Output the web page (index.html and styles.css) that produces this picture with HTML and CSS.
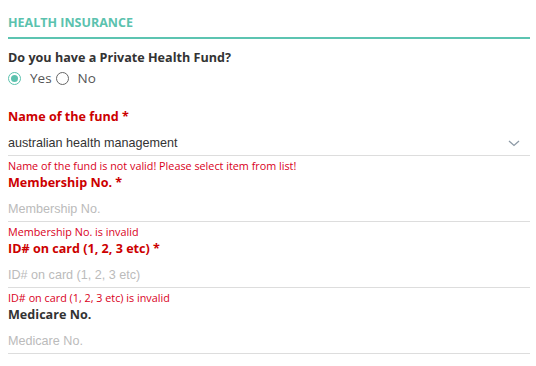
FILE: index.html
```html
<!DOCTYPE html>
<html>
<head>
<meta charset="utf-8">
<link rel="stylesheet" href="styles.css">
</head>
<body>
<div class="form">
  <div class="section-title">HEALTH INSURANCE</div>
  <div class="question">
    <div class="label">Do you have a Private Health Fund?</div>
    <div class="radios">
      <label class="radio"><span class="circle checked"></span><span class="rtext">Yes</span></label>
      <label class="radio"><span class="circle"></span><span class="rtext">No</span></label>
    </div>
  </div>
  <div class="field first">
    <div class="label invalid">Name of the fund *</div>
    <div class="input select"><span class="value">australian health management</span>
      <svg class="chev" width="12" height="7" viewBox="0 0 12 7"><path d="M1 1 L6 5.5 L11 1" fill="none" stroke="#8d9aa6" stroke-width="1.3"/></svg>
    </div>
    <div class="error">Name of the fund is not valid! Please select item from list!</div>
  </div>
  <div class="field">
    <div class="label invalid">Membership No. *</div>
    <div class="input"><span class="ph">Membership No.</span></div>
    <div class="error">Membership No. is invalid</div>
  </div>
  <div class="field">
    <div class="label invalid">ID# on card (1, 2, 3 etc) *</div>
    <div class="input"><span class="ph">ID# on card (1, 2, 3 etc)</span></div>
    <div class="error">ID# on card (1, 2, 3 etc) is invalid</div>
  </div>
  <div class="field">
    <div class="label">Medicare No.</div>
    <div class="input"><span class="ph">Medicare No.</span></div>
  </div>
</div>
</body>
</html>
```
FILE: styles.css
```css
html, body { margin: 0; padding: 0; background: #fff; }
body { font-family: "Open Sans", sans-serif; color: #333; }
.form { width: 522px; margin-left: 8px; padding-top: 14px; }
.section-title {
  font-size: 12.5px; font-weight: 700; color: #5bc2ae;
  line-height: 17px; padding-bottom: 6px;
  border-bottom: 2px solid #5cc4b1;
}
.question { padding-top: 10px; }
.label { font-size: 12.6px; font-weight: 700; line-height: 18px; color: #333; }
.label.invalid { color: #cc0000; }
.radios { display: flex; align-items: center; height: 22px; }
.radio { display: flex; align-items: center; }
.circle {
  width: 11px; height: 11px; border: 1px solid #666; border-radius: 50%;
  display: inline-flex; align-items: center; justify-content: center; box-sizing: content-box;
}
.circle.checked { border-color: #5bc2ae; }
.circle.checked::after { content: ""; width: 7px; height: 7px; border-radius: 50%; background: #5bc2ae; }
.rtext { font-size: 13.5px; color: #555; margin-left: 9px; margin-right: 4px; }
.field.first { margin-top: 19px; }
.input {
  border-bottom: 1px solid #ddd; display: flex; align-items: flex-end;
  padding-bottom: 4px; box-sizing: border-box; height: 30px;
  font-family: "Liberation Sans", Arial, sans-serif; font-size: 12.6px; line-height: 15px;
}
.input .value { color: #333; flex: 1; }
.input .ph { color: #bbb; }
.chev { margin-right: 10px; margin-bottom: 4px; }
.error { font-size: 10.8px; line-height: 16px; padding-top: 2px; color: #d9001b; }
```
